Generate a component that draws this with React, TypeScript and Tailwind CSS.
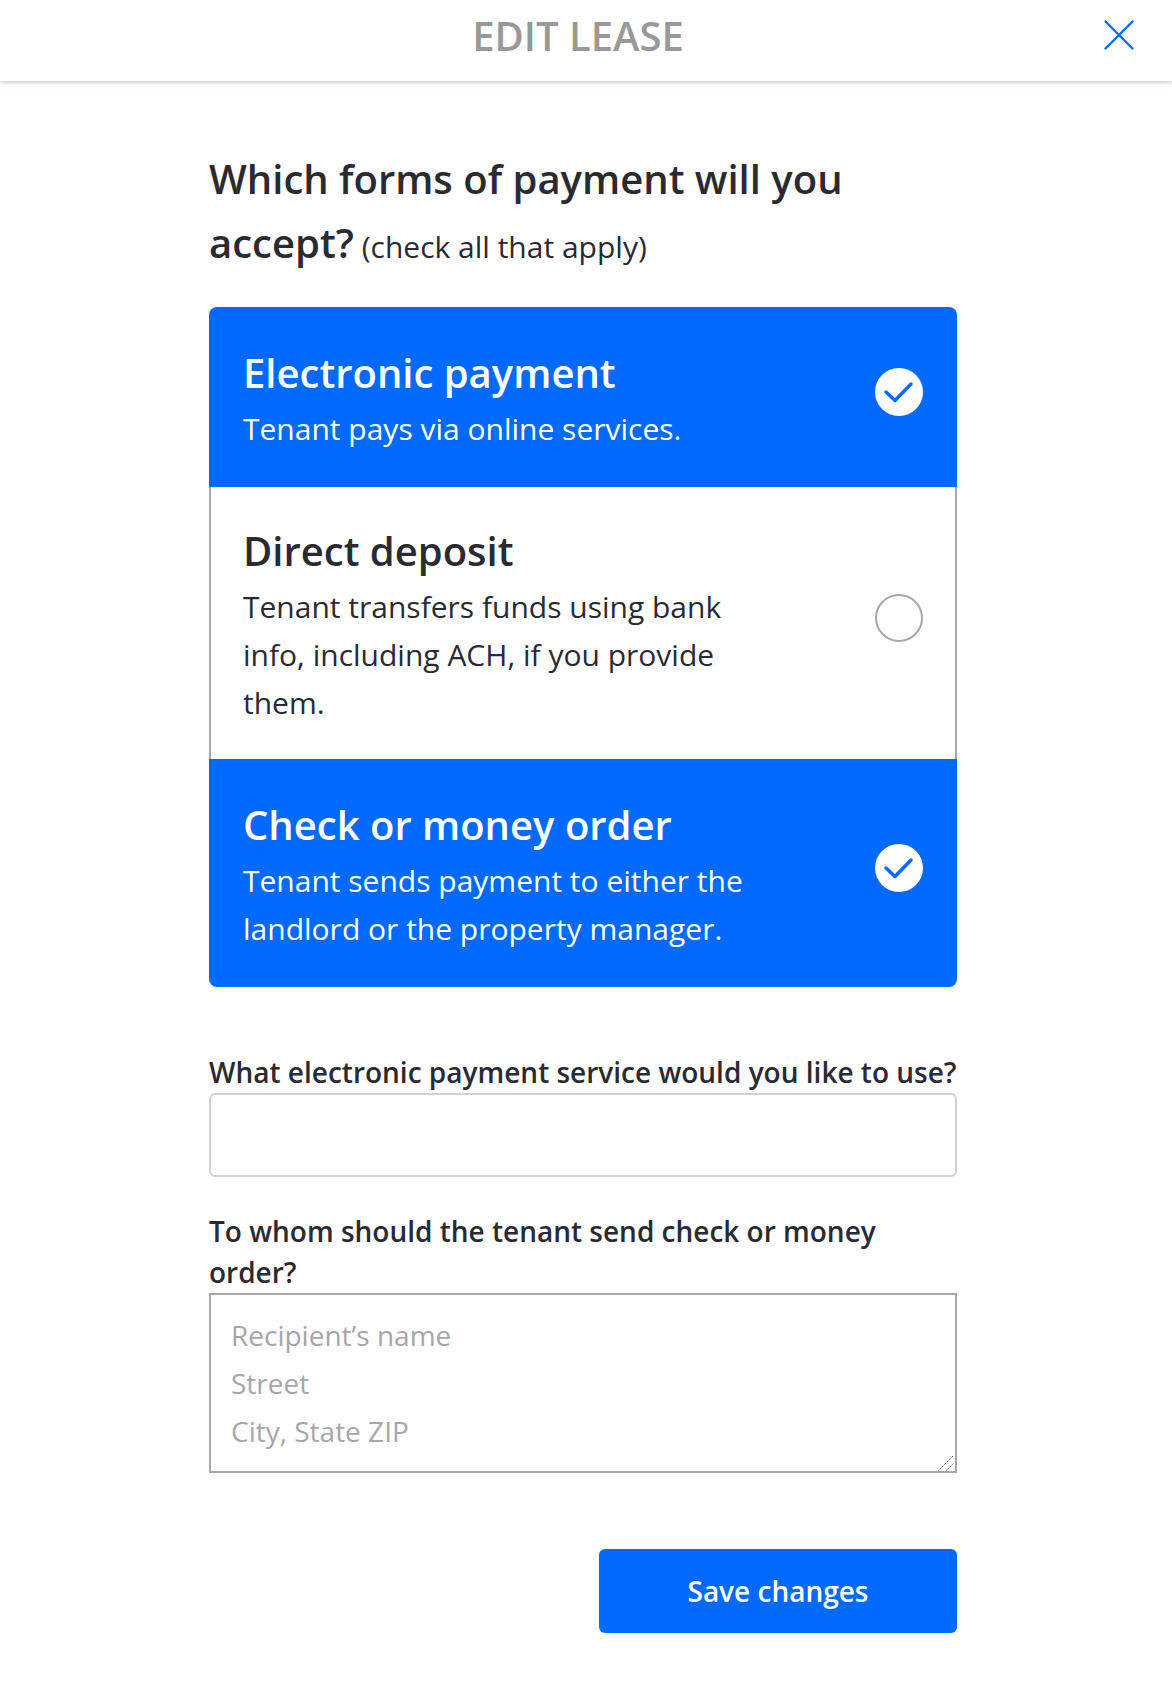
const font = "[font-family:'Open_Sans',sans-serif]";

const options = [
  {
    title: "Electronic payment",
    lines: "Tenant pays via online services.",
    checked: true,
    pad: "pt-[36px] pb-[34px] rounded-t-[8px]",
  },
  {
    title: "Direct deposit",
    lines: "Tenant transfers funds using bank info, including ACH, if you provide them.",
    checked: false,
    pad: "pt-[34px] pb-[32px]",
  },
  {
    title: "Check or money order",
    lines: "Tenant sends payment to either the landlord or the property manager.",
    checked: true,
    pad: "pt-[36px] pb-[34px] rounded-b-[8px]",
  },
];

function Check({ checked }: { checked: boolean }) {
  if (!checked) {
    return <div className="mb-[13px] h-12 w-12 shrink-0 rounded-full border-2 border-[#a7a6ab] bg-white" />;
  }
  return (
    <div className="mb-[13px] flex h-12 w-12 shrink-0 items-center justify-center rounded-full bg-white">
      <svg width="32" height="32" viewBox="0 0 32 32" fill="none">
        <path d="M3 16 L12 24.5 L28 8" stroke="#006aff" strokeWidth="3.4" strokeLinecap="round" strokeLinejoin="round" />
      </svg>
    </div>
  );
}

export default function App() {
  return (
    <div className={`h-[1700px] bg-white text-[#2a2a33] ${font}`}>
      <header className="relative flex h-[81px] items-center justify-center pr-[16px] pb-[9px] shadow-[0_2px_2px_rgba(0,0,0,0.1),0_3px_8px_rgba(0,0,0,0.08)]">
        <h1 className="text-[40px] font-semibold leading-none text-[#999]">EDIT LEASE</h1>
        <button type="button" className="absolute right-[38px] top-[20px]">
          <svg width="30" height="30" viewBox="0 0 30 30" fill="none" className="block">
            <path d="M1.5 1.5 L28.5 28.5 M28.5 1.5 L1.5 28.5" stroke="#006aff" strokeWidth="2.4" strokeLinecap="round" />
          </svg>
        </button>
      </header>

      <main className="pl-[209px] pr-[215px] pt-[66px]">
        <h2 className="mb-[28px] text-[40px] font-semibold leading-[64px]">
          Which forms of payment will you accept?
          <span className="text-[30px] font-normal"> (check all that apply)</span>
        </h2>

        <div>
          {options.map((o) => (
            <div
              key={o.title}
              className={`flex items-center justify-between ${o.pad} ${
                o.checked ? "bg-[#006aff] pl-[34px] pr-[34px] text-white" : "border-x-2 border-[#a7a6ab] bg-white pl-[32px] pr-[32px]"
              }`}
            >
              <div className="w-[520px]">
                <div className="mb-[2px] text-[40px] font-semibold leading-[60px]">{o.title}</div>
                <p className="text-[30px] leading-[48px]">{o.lines}</p>
              </div>
              <Check checked={o.checked} />
            </div>
          ))}
        </div>

        <label className="mt-[65px] block text-[28px] font-semibold leading-[41px]">
          What electronic payment service would you like to use?
        </label>
        <input type="text" className="block h-[84px] w-full rounded-[6px] border-2 border-[#d1d1d5] bg-white" />

        <label className="mt-[34px] block text-[28px] font-semibold leading-[41px]">
          To whom should the tenant send check or money order?
        </label>
        <div className="relative">
          <textarea
            placeholder={"Recipient’s name\nStreet\nCity, State ZIP"}
            className="block h-[180px] w-full resize-none border-2 border-[#a7a6ab] bg-white px-[20px] py-[16px] text-[28px] leading-[48px] placeholder:text-[#a7a6ab]"
          />
          <svg width="16" height="16" viewBox="0 0 16 16" fill="none" className="absolute bottom-[2px] right-[3px]">
            <path d="M0.5 15.5 L15.5 0.5 M8.5 15.5 L15.5 8.5" stroke="#555" strokeWidth="1" strokeDasharray="1.4 1" />
          </svg>
        </div>

        <div className="mt-[76px] flex justify-end">
          <button type="button" className="h-[84px] w-[358px] rounded-[6px] bg-[#006aff] text-[28px] font-semibold text-white">
            Save changes
          </button>
        </div>
      </main>
    </div>
  );
}
